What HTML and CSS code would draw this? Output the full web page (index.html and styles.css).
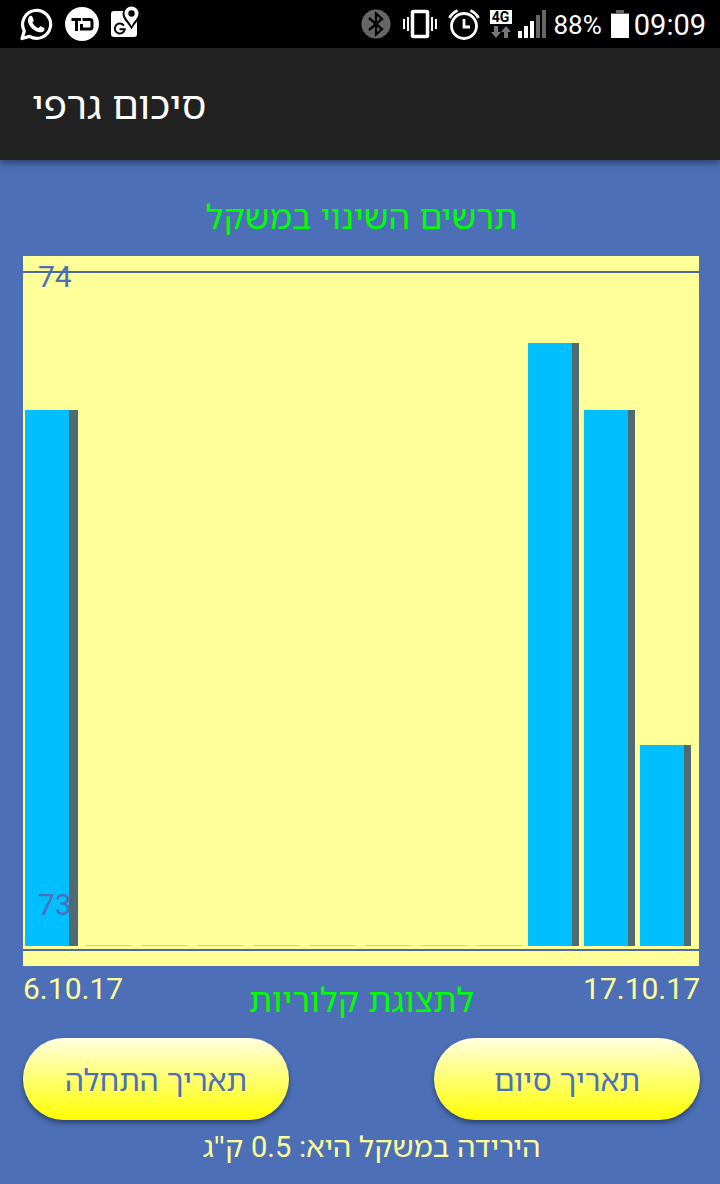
FILE: index.html
```html
<!DOCTYPE html>
<html lang="he">
<head>
<meta charset="utf-8">
<meta name="viewport" content="width=device-width, initial-scale=1">
<title>סיכום גרפי</title>
<link rel="stylesheet" href="styles.css">
</head>
<body>
<div class="status-bar">
  <div class="status-group notifications">
    <svg width="34" height="36" viewBox="0 0 34 36" aria-label="WhatsApp"><path d="M3 32.500 5.300 25A14 14 0 1 1 10.500 30.400Z" fill="none" stroke="#fff" stroke-width="3.200" stroke-linejoin="round"/><path d="M9.800 11.200c1.400-2 3-1.800 3.700-.1l1.200 3c.3.9-1.300 2-1.200 2.700 1 2.200 3 4.200 5.600 5.200.9.300 1.700-2 2.700-1.700l3 1.500c1 .5.9 1.500.3 2.600-1 1.800-3.300 2.300-5.700 1.600-5-1.500-8.600-5.100-10.100-9.300-.7-2-.4-4.200.5-5.500Z" fill="#fff"/></svg>
    <svg width="34" height="36" viewBox="0 0 34 36" aria-label="TD"><circle cx="17" cy="18" r="17" fill="#fff"/><path d="M6.500 13.500h9.500M11.500 13.500v11.500M17.500 13.500h7.500q2 0 2 2v5.500q0 2-2 2H16.500v-5" fill="none" stroke="#000" stroke-width="3"/></svg>
    <svg width="28" height="36" viewBox="0 0 28 36" overflow="visible" aria-label="Maps"><rect x="0" y="5" width="26" height="26" rx="3" fill="#fff"/><path d="M13 19.800a5 5 0 1 0 .8 3.400H8.500" fill="none" stroke="#000" stroke-width="2"/><path d="M20.500-1A8.800 8.800 0 0 0 11.500 7.500C11.500 14 17.500 17 20.500 23.500 23.500 17 29.500 14 29.500 7.500A8.800 8.800 0 0 0 20.500-1Z" fill="#000"/><path d="M20.500.5a7 7 0 0 0-7 7c0 5 5 7.500 7 13 2-5.500 7-8 7-13a7 7 0 0 0-7-7Z" fill="#fff"/><circle cx="20.500" cy="7.500" r="3.200" fill="#000"/></svg>
  </div>
  <div class="status-group system">
    <svg class="bluetooth" width="30" height="30" viewBox="0 0 30 30" aria-label="Bluetooth"><circle cx="15" cy="15" r="14.500" fill="#666"/><path d="m8 9 13 11-6 5.500V4.500l6 5.500L8 21" fill="none" stroke="#000" stroke-width="2.300"/></svg>
    <svg class="vibrate" width="36" height="30" viewBox="0 0 36 30" aria-label="Vibrate"><path d="M2 10v10M6 8v14M30 8v14M34 10v10" stroke="#fff" stroke-width="2"/><rect x="10.500" y="2.500" width="15" height="25" rx="1" fill="none" stroke="#fff" stroke-width="3.500"/></svg>
    <svg class="alarm" width="32" height="32" viewBox="0 0 32 32" aria-label="Alarm"><circle cx="16" cy="18" r="12.500" fill="none" stroke="#fff" stroke-width="2.800"/><path d="M16 11v8h6M1.500 10Q4 5 9.500 2.500M30.500 10Q28 5 22.500 2.500" fill="none" stroke="#fff" stroke-width="2.800"/></svg>
    <div class="network">
      <span class="network-type">4G</span>
      <svg width="22" height="12" viewBox="0 0 22 12"><path d="M4 0h4v6h3l-5 6-5-6h3ZM14 12h4V6h3l-5-6-5 6h3Z" fill="#777"/></svg>
    </div>
    <svg class="signal" width="28" height="28" viewBox="0 0 28 28" aria-label="Signal"><path d="M0 21h4v7H0ZM6 16h4v12H6ZM12 11h4v17h-4Z" fill="#fff"/><path d="M18 5h4v23h-4ZM24 0h4v28h-4Z" fill="#666"/></svg>
    <span class="battery-level">88%</span>
    <svg class="battery" width="18" height="28" viewBox="0 0 18 28" aria-label="Battery"><path d="M5 0h8v3h5v2H0V3h5Z" fill="#666"/><path d="M0 4h18v24H0Z" fill="#fff"/></svg>
    <time class="clock">09:09</time>
  </div>
</div>
<header class="app-bar"><h1 class="app-title" dir="rtl">סיכום גרפי</h1></header>
<main class="content">
  <h2 class="chart-title" dir="rtl">תרשים השינוי במשקל</h2>
  <div class="chart">
    <div class="bars">
      <div class="bar first" style="height:80%"></div>
      <div class="bar empty"></div>
      <div class="bar empty"></div>
      <div class="bar empty"></div>
      <div class="bar empty"></div>
      <div class="bar empty"></div>
      <div class="bar empty"></div>
      <div class="bar empty"></div>
      <div class="bar empty"></div>
      <div class="bar" style="height:90%"></div>
      <div class="bar" style="height:80%"></div>
      <div class="bar" style="height:30%"></div>
    </div>
    <div class="line line-top"></div>
    <div class="line line-bottom"></div>
    <span class="value value-max">74</span>
    <span class="value value-min">73</span>
  </div>
  <div class="range">
    <span class="date">6.10.17</span>
    <a class="switch-link" href="#calories" dir="rtl">לתצוגת קלוריות</a>
    <span class="date date-end">17.10.17</span>
  </div>
  <div class="actions">
    <button class="date-button" type="button" dir="rtl">תאריך התחלה</button>
    <button class="date-button" type="button" dir="rtl">תאריך סיום</button>
  </div>
  <p class="summary" dir="rtl">הירידה במשקל היא: <span class="number">0.5</span> ק"ג</p>
</main>
</body>
</html>
```
FILE: styles.css
```css
* { box-sizing: border-box; }
body {
  margin: 0;
  min-height: 100vh;
  background: #4c6fb7;
  color: #ffff99;
  font-family: Roboto, "Noto Sans", sans-serif;
  font-size: 30px;
}
.app-title, .chart-title, .switch-link, .date-button, .summary {
  font-family: "Noto Sans Hebrew", "Noto Sans", sans-serif;
}
.status-bar {
  display: flex;
  justify-content: space-between;
  align-items: center;
  height: 48px;
  padding: 0 14px 0 19px;
  background: #000;
  color: #fff;
}
.status-group { display: flex; align-items: center; }
.status-group svg { flex: none; display: block; }
.notifications { gap: 12px; }
.bluetooth { margin-right: 11px; }
.vibrate { margin-right: 10px; }
.alarm { margin-right: 10px; }
.network { display: flex; flex-direction: column; align-items: center; margin-right: 6px; }
.network-type {
  width: 22px;
  background: #fff;
  color: #000;
  font-size: 14px;
  font-weight: 700;
  line-height: 14px;
  text-align: center;
}
.network svg { margin-top: 2px; }
.signal { margin-right: 8px; }
.battery-level { font-size: 26px; line-height: 48px; margin-right: 9px; padding-top: 2px; }
.battery { margin-right: 5px; }
.clock { font-size: 29px; line-height: 48px; padding-top: 2px; }
.app-bar {
  position: relative;
  display: flex;
  align-items: center;
  height: 112px;
  padding: 0 32px;
  background: #212121;
  color: #fff;
  box-shadow: 0 2px 8px rgba(0, 0, 0, .5);
}
.app-title { margin: 0; font-size: 39px; font-weight: 400; line-height: 48px; }
.content { padding: 32px 20px 16px 23px; }
.chart-title {
  margin: 0 0 16px;
  color: #00ff00;
  font-size: 34px;
  font-weight: 400;
  line-height: 48px;
  text-align: center;
}
.chart {
  position: relative;
  padding: 20px 3px 20px 2px;
  margin-right: 1px;
  background: #ffff99;
}
.bars {
  display: grid;
  grid-template-columns: repeat(12, 1fr);
  align-items: end;
  height: 670px;
}
.bar {
  margin-right: 5px;
  background: #00bfff;
  border-right: 7px solid #4f6a70;
}
.first { margin-right: 3px; border-right-width: 9px; }
.empty { height: 1px; margin: 0 5px; background: #8cecc4; border: 0; }
.line { position: absolute; left: 0; right: 0; height: 2px; background: #4f6a94; }
.line-top { top: 15px; }
.line-bottom { bottom: 15px; }
.value { position: absolute; left: 15px; color: #4c6fb7; line-height: 36px; }
.value-max { top: 3px; }
.value-min { bottom: 43px; }
.range {
  display: grid;
  grid-template-columns: 1fr auto 1fr;
  align-items: start;
  height: 64px;
  padding-top: 5px;
}
.date { line-height: 36px; }
.date-end { text-align: right; }
.switch-link { padding-top: 4px; color: #00ff00; font-size: 34px; line-height: 48px; text-decoration: none; }
.actions { display: flex; justify-content: space-between; margin-top: 8px; }
.date-button {
  width: 266px;
  height: 82px;
  padding: 0;
  border: 0;
  border-radius: 41px;
  background: linear-gradient(#ffffe0, #ffff00);
  color: #4c6fb7;
  box-shadow: 0 3px 5px rgba(0, 0, 0, .4);
  font-size: 30px;
}
.summary { margin: 8px 0 0; padding-left: 20px; font-size: 29px; line-height: 36px; text-align: center; }
.number { font-family: Roboto, sans-serif; }
```
